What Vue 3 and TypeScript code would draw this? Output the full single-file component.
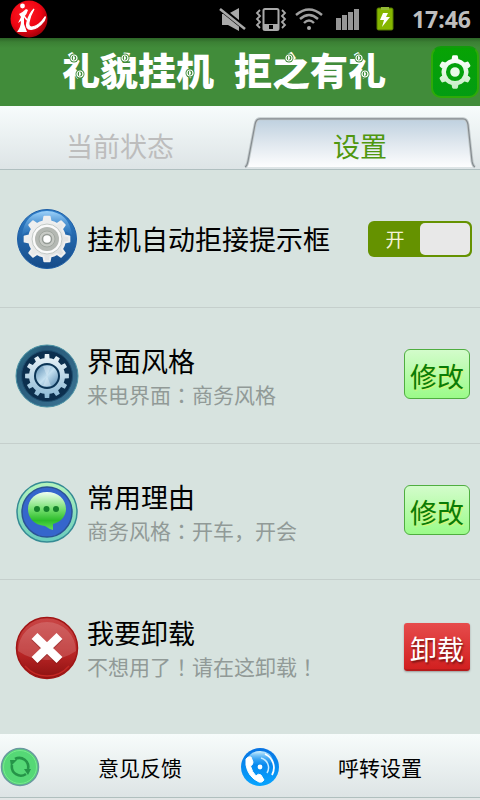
<script setup lang="ts">
import { ref } from 'vue'

type IconName = 'gear' | 'theme' | 'chat' | 'remove'

interface SettingRow {
  id: string
  icon: IconName
  title: string
  hint?: string[]
  action?: string
  danger?: boolean
}

const tabs = ['当前状态', '设置']
const activeTab = ref(1)
const autoReject = ref(true)

// Colons and exclamation marks get their own part so that they can sit centred in their cell.
const rows: SettingRow[] = [
  { id: 'auto', icon: 'gear', title: '挂机自动拒接提示框' },
  { id: 'style', icon: 'theme', title: '界面风格', hint: ['来电界面', '：', '商务风格'], action: '修改' },
  { id: 'reason', icon: 'chat', title: '常用理由', hint: ['商务风格', '：', '开车，开会'], action: '修改' },
  { id: 'remove', icon: 'remove', title: '我要卸载', hint: ['不想用了', '！', '请在这卸载', '！'], action: '卸载', danger: true },
]

const beads = [[12, 5], [18, 21], [63, 5], [128, 20], [227, 5], [297, 5], [303, 21]]

function gearPath(c: number, teeth: number, outer: number, inner: number, topShare: number, footShare: number): string {
  const step = (Math.PI * 2) / teeth
  const points: string[] = []
  const add = (r: number, a: number) => points.push(`${(c + r * Math.sin(a)).toFixed(2)} ${(c - r * Math.cos(a)).toFixed(2)}`)
  for (let i = 0; i < teeth; i++) {
    const a = i * step
    add(inner, a - step * 0.5)
    add(inner, a - step * footShare)
    add(outer, a - step * topShare)
    add(outer, a + step * topShare)
    add(inner, a + step * footShare)
  }
  return `M${points.join('L')}Z`
}

const headerGear = gearPath(16, 6, 14.5, 11.5, 0.1, 0.17)
const silverGear = gearPath(32, 8, 22.5, 18, 0.15, 0.25)
const steelGear = gearPath(32, 12, 22, 18, 0.19, 0.27)
</script>

<template>
  <div class="app">
    <div class="status">
      <svg class="brand" viewBox="0 0 38 38" aria-hidden="true">
        <defs>
          <radialGradient id="brandBall" cx=".4" cy=".35" r=".65">
            <stop offset="0" stop-color="#ff1a24" />
            <stop offset=".65" stop-color="#ee0512" />
            <stop offset="1" stop-color="#a8000a" />
          </radialGradient>
        </defs>
        <circle cx="19" cy="19" r="18.5" fill="url(#brandBall)" />
        <circle cx="12.500" cy="6" r="2.400" fill="#fff" />
        <path d="M9 14Q13 12 16 9L18 10Q17 14 14 17L14 24L17 32L7 32Q11 27 11 21L8 23L11 17Z" fill="#fff" />
        <path d="M14 16L17 20" stroke="#fff" stroke-width="1.600" />
        <path d="M24 9Q20 16 19 22Q18 27 22 27Q29 26 35 17Q36 16 34 21Q28 29 21 29.500Q15 29 17 22Q19 14 24 9Z" fill="#fff" stroke="#fff" stroke-width="1.200" />
      </svg>
      <div class="indicators">
        <svg width="36" height="38" viewBox="216 0 36 38" aria-hidden="true">
          <path d="M221 14H227L238 8V31L227 25H221Z" fill="#a9a9a9" />
          <path d="M219 8L245 29" stroke="#000" stroke-width="5" />
          <path d="M219 9L244 29" stroke="#a9a9a9" stroke-width="2.600" />
        </svg>
        <svg width="38" height="38" viewBox="252 0 38 38" aria-hidden="true">
          <rect x="262.500" y="9" width="15" height="21" rx="1.500" fill="none" stroke="#a9a9a9" stroke-width="2" />
          <path d="M262 24H278V30H262Z" fill="#a9a9a9" />
          <rect x="268" y="25" width="4" height="4" fill="#000" />
          <path d="M259 10L256 13L259 16L256 19L259 22L256 25L259 28M281 10L284 13L281 16L284 19L281 22L284 25L281 28" fill="none" stroke="#a9a9a9" stroke-width="1.800" />
        </svg>
        <svg width="38" height="38" viewBox="290 0 38 38" aria-hidden="true">
          <path d="M295 15Q308 4 321 15M299 19Q308 11 317 19M303 23Q308 18 313 23" fill="none" stroke="#a0a0a0" stroke-width="2.400" />
          <circle cx="308" cy="28" r="2" fill="#aaa" />
        </svg>
        <svg width="38" height="38" viewBox="328 0 38 38" aria-hidden="true">
          <path d="M335 18H340V30H335ZM341 15H346V30H341ZM347 12H352V30H347ZM353 9H358V30H353Z" fill="#969696" />
        </svg>
        <svg width="38" height="38" viewBox="366 0 38 38" aria-hidden="true">
          <rect x="376" y="8" width="16" height="22" rx="1.500" fill="#86b600" stroke="#537a00" stroke-width="1" />
          <rect x="380" y="7" width="8" height="3" fill="#93b935" />
          <path d="M382 13H387L385 17H389L381 27L383 20H379Z" fill="#fff" />
        </svg>
        <time>17:46</time>
      </div>
    </div>

    <header class="header">
      <h1>
        <span>礼貌挂机</span>
        <span>拒之有礼</span>
        <svg class="beads" viewBox="0 0 324 38" aria-hidden="true">
          <g v-for="([x, y], i) in beads" :key="i" :transform="`translate(${x} ${y})`">
            <circle r="4.500" fill="#418c3a" />
            <circle r="3" fill="#418c3a" stroke="#fff" stroke-width="1.200" />
            <path d="M-1 -2A2 2 0 0 1 -1 2Z" fill="#fff" />
          </g>
        </svg>
      </h1>
      <button class="gear-button" type="button" aria-label="设置">
        <svg viewBox="0 0 32 32" aria-hidden="true">
          <defs>
            <linearGradient id="gearFace" x1="0" y1="0" x2="0" y2="1">
              <stop offset="0" stop-color="#fff" />
              <stop offset="1" stop-color="#c6efc6" />
            </linearGradient>
          </defs>
          <path :d="headerGear" fill="url(#gearFace)" stroke="url(#gearFace)" stroke-width="2.500" stroke-linejoin="round" />
          <circle cx="16" cy="16" r="6.500" fill="#e8fae8" stroke="#04a10c" stroke-width="4" />
        </svg>
      </button>
    </header>

    <nav class="tabs">
      <button
        v-for="(tab, index) in tabs"
        :key="tab"
        type="button"
        class="tab"
        :class="{ active: activeTab === index }"
        @click="activeTab = index"
      >
        <svg v-if="activeTab === index" class="tab-shape" viewBox="0 0 240 64" preserveAspectRatio="none" aria-hidden="true">
          <defs>
            <linearGradient id="tabFace" x1="0" y1="0" x2="0" y2="1">
              <stop offset="0" stop-color="#bed0df" />
              <stop offset=".5" stop-color="#dfe7ee" />
              <stop offset="1" stop-color="#fdfdfe" />
            </linearGradient>
          </defs>
          <path d="M5 62Q7 61 8 56L15 19Q16 13 20 13H223Q227 13 228 19L232 56Q233 61 235 62Z" fill="url(#tabFace)" />
          <path d="M5 62Q7 61 8 56L15 19Q16 13 20 13H223Q227 13 228 19L232 56Q233 61 235 62" fill="none" stroke="#c3cacc" stroke-width="3" />
          <path d="M5 62Q7 61 8 56L15 19Q16 13 20 13H223Q227 13 228 19L232 56Q233 61 235 62" fill="none" stroke="#868c90" stroke-width="1.200" />
        </svg>
        <span>{{ tab }}</span>
      </button>
    </nav>

    <main class="list">
      <section v-for="row in rows" :key="row.id" class="row">
        <svg class="row-icon" viewBox="0 0 64 64" aria-hidden="true">
          <template v-if="row.icon === 'gear'">
            <defs>
              <linearGradient id="blueDisc" x1="0" y1="0" x2="0" y2="1">
                <stop offset="0" stop-color="#2f7fca" />
                <stop offset="1" stop-color="#164b88" />
              </linearGradient>
              <linearGradient id="blueGloss" x1="0" y1="0" x2="0" y2="1">
                <stop offset="0" stop-color="#9fd3fa" />
                <stop offset="1" stop-color="#3a86cb" stop-opacity=".3" />
              </linearGradient>
              <linearGradient id="silver" x1="0" y1="0" x2="1" y2="1">
                <stop offset="0" stop-color="#f4f4f4" />
                <stop offset="1" stop-color="#dcdede" />
              </linearGradient>
            </defs>
            <circle cx="32" cy="32" r="29.500" fill="url(#blueDisc)" stroke="#1d5ea6" />
            <path d="M7 28Q10 5 32 4Q54 5 57 28Q46 20 32 21Q17 21 7 28Z" fill="url(#blueGloss)" />
            <path :d="silverGear" fill="url(#silver)" stroke="#efefef" stroke-width="2" stroke-linejoin="round" />
            <circle cx="32" cy="32" r="15" fill="#fafafa" stroke="#c3c9c6" />
            <circle cx="32" cy="32" r="12" fill="#b4b8b3" />
            <circle cx="32" cy="32" r="8" fill="#c7cac5" stroke="#a1a7a0" />
            <circle cx="32" cy="32" r="4.500" fill="#fff" stroke="#959b96" stroke-width="1.500" />
          </template>
          <template v-else-if="row.icon === 'theme'">
            <defs>
              <linearGradient id="tealRim" x1="0" y1="0" x2="1" y2="1">
                <stop offset="0" stop-color="#368a98" />
                <stop offset=".25" stop-color="#275878" />
                <stop offset="1" stop-color="#3b7595" />
              </linearGradient>
              <linearGradient id="steel" x1="0" y1="0" x2="0" y2="1">
                <stop offset="0" stop-color="#ecf4f8" />
                <stop offset="1" stop-color="#8dbad6" />
              </linearGradient>
              <linearGradient id="hub" x1="0" y1="0" x2="1" y2="1">
                <stop offset="0" stop-color="#4e82aa" />
                <stop offset=".5" stop-color="#c4e0f0" />
                <stop offset="1" stop-color="#4e82aa" />
              </linearGradient>
            </defs>
            <circle cx="32" cy="32" r="31" fill="url(#tealRim)" stroke="#4c93a5" />
            <circle cx="32" cy="32" r="25.500" fill="#0c2f4e" stroke="#1e4d6e" />
            <path :d="steelGear" fill="url(#steel)" />
            <circle cx="32" cy="32" r="12" fill="url(#hub)" stroke="#0c3556" stroke-width="2" />
            <path d="M32 32L28 22H36ZM32 32L36 42H28Z" fill="#e0f0f8" opacity=".45" />
          </template>
          <template v-else-if="row.icon === 'chat'">
            <defs>
              <linearGradient id="mintRim" x1="0" y1="0" x2="0" y2="1">
                <stop offset="0" stop-color="#b5f5bc" />
                <stop offset="1" stop-color="#68cbbd" />
              </linearGradient>
              <linearGradient id="bubble" x1="0" y1="0" x2="0" y2="1">
                <stop offset="0" stop-color="#f0fff0" />
                <stop offset=".45" stop-color="#76df70" />
                <stop offset=".75" stop-color="#2dbd2b" />
                <stop offset="1" stop-color="#62df54" />
              </linearGradient>
            </defs>
            <circle cx="32" cy="32" r="30" fill="url(#mintRim)" stroke="#358b94" stroke-width="1.500" />
            <circle cx="32" cy="32" r="25" fill="#3566cc" stroke="#2b5395" stroke-width="1.500" />
            <path d="M32 12C43 12 51 19 51 29C51 36 46 42 38 44L38 50Q34 49 30 46C19 45 13 38 13 29C13 19 21 12 32 12Z" fill="url(#bubble)" />
            <g fill="#16822b">
              <circle cx="22" cy="29" r="3" /><circle cx="31.500" cy="29" r="3" /><circle cx="41" cy="29" r="3" />
            </g>
          </template>
          <template v-else>
            <defs>
              <linearGradient id="redDisc" x1="0" y1="0" x2="0" y2="1">
                <stop offset="0" stop-color="#c94646" />
                <stop offset=".6" stop-color="#b82525" />
                <stop offset="1" stop-color="#8d1111" />
              </linearGradient>
            </defs>
            <circle cx="32" cy="32" r="30.500" fill="url(#redDisc)" stroke="#a01515" stroke-width="1.500" />
            <path d="M3 35A29 29 0 0 1 61 35Q48 44 32 44Q16 44 3 35Z" fill="#fff" opacity=".16" />
            <path d="M10 50A29 29 0 0 0 54 50" fill="none" stroke="#c42824" stroke-width="1.500" />
            <path d="M19.500 20L44.500 44M44.500 20L19.500 44" stroke="#6e1515" stroke-width="9" opacity=".35" transform="translate(0 1)" />
            <path d="M19.500 20L44.500 44M44.500 20L19.500 44" stroke="#fff" stroke-width="8.500" />
          </template>
        </svg>

        <div class="row-text">
          <label v-if="row.id === 'auto'" class="row-title" for="auto-reject">{{ row.title }}</label>
          <h2 v-else class="row-title">{{ row.title }}</h2>
          <p v-if="row.hint" class="row-hint">
            <span v-for="(part, i) in row.hint" :key="i" :class="{ mark: i % 2 === 1 }">{{ part }}</span>
          </p>
        </div>

        <div v-if="row.id === 'auto'" class="switch" :class="{ off: !autoReject }">
          <input id="auto-reject" v-model="autoReject" type="checkbox" role="switch" />
          <span class="switch-word">{{ autoReject ? '开' : '关' }}</span>
          <span class="switch-knob"></span>
        </div>
        <button v-else class="action" :class="{ danger: row.danger }" type="button">{{ row.action }}</button>
      </section>
    </main>

    <footer class="footer">
      <button type="button" class="foot-item">
        <svg viewBox="0 0 40 40" aria-hidden="true">
          <circle cx="20" cy="20" r="18.500" fill="#55d876" stroke="#6a98a0" stroke-width="1.500" />
          <circle cx="20" cy="20" r="16.500" fill="none" stroke="#79e78f" />
          <path d="M15 12A9 9 0 0 1 28 22M26 27A9 9 0 0 1 12 18" fill="none" stroke="#259448" stroke-width="2.600" />
          <path d="M24 22H31L28 28ZM10 13H17L11 19Z" fill="#259448" />
        </svg>
        <span>意见反馈</span>
      </button>
      <button type="button" class="foot-item">
        <svg viewBox="0 0 40 40" aria-hidden="true">
          <defs>
            <linearGradient id="callDisc" x1="0" y1="0" x2="0" y2="1">
              <stop offset="0" stop-color="#0873e2" />
              <stop offset="1" stop-color="#08a5ff" />
            </linearGradient>
            <linearGradient id="callGloss" x1="0" y1="0" x2="0" y2="1">
              <stop offset="0" stop-color="#d8f5ff" />
              <stop offset="1" stop-color="#24a9fa" stop-opacity=".2" />
            </linearGradient>
          </defs>
          <circle cx="20" cy="20" r="19" fill="url(#callDisc)" />
          <path d="M6 15Q9 4 20 4Q31 4 34 15Q20 20 6 15Z" fill="url(#callGloss)" />
          <path d="M21 11A10 10 0 0 1 27 26" fill="none" stroke="#c8ecff" stroke-width="1.500" />
          <path d="M25 7A15 15 0 0 1 32 28" fill="none" stroke="#fff" stroke-width="1.800" />
          <circle cx="20" cy="20" r="2.400" fill="#fff" />
          <path d="M6 12Q8 9 11 10L13 15Q13 18 10.500 19Q12 25 16 29Q18 26 21 28L24 33Q22 36 19 35Q8 30 6 18Z" fill="#fff" stroke="#fff" stroke-width="1" />
        </svg>
        <span>呼转设置</span>
      </button>
    </footer>
  </div>
</template>

<style>
body {
  background: #d7e3df;
}
</style>

<style scoped>
.app {
  display: flex;
  flex-direction: column;
  min-height: 100vh;
  background: #d7e3df;
  color: #000;
  font-family: "Noto Sans CJK SC", sans-serif;
}

button {
  padding: 0;
  border: 0;
  background: none;
  color: inherit;
  font: inherit;
  cursor: pointer;
}

svg {
  display: block;
}

.status {
  display: flex;
  align-items: center;
  justify-content: space-between;
  height: 38px;
  padding: 0 9px 0 10px;
  background: #000;
}

.brand {
  width: 38px;
  height: 38px;
}

.indicators {
  display: flex;
  align-items: center;
}

.indicators time {
  padding-left: 7px;
  color: #bebebe;
  font: bold 23px/38px "Noto Sans", sans-serif;
}

.header {
  display: flex;
  align-items: center;
  justify-content: space-between;
  height: 68px;
  padding: 0 1px 0 62px;
  background: linear-gradient(#2c6427, #3b8034 4px, #418c3a 10px);
}

.header h1 {
  position: relative;
  display: flex;
  gap: 20px;
  margin: 0;
  padding-bottom: 6px;
  color: #fff;
  font-size: 38px;
  font-weight: 900;
  line-height: 62px;
}

.beads {
  position: absolute;
  top: 15px;
  left: 0;
  width: 324px;
  height: 38px;
}

.gear-button {
  display: grid;
  place-items: center;
  width: 48px;
  height: 52px;
  border: 2px solid #2eaa08;
  border-top-color: #129b0c;
  border-radius: 10px;
  background: linear-gradient(#07a304, #039c12);
}

.gear-button svg {
  width: 34px;
  height: 34px;
}

.tabs {
  display: grid;
  grid-template-columns: 1fr 1fr;
  height: 63px;
  border-bottom: 1px solid #b0bfc0;
  background: linear-gradient(#f7fcfc, #dde4e6);
}

.tab {
  position: relative;
  padding-top: 16px;
  color: #bdbdbd;
  font-size: 27px;
  line-height: 46px;
}

.tab.active {
  color: #50970f;
}

.tab span {
  position: relative;
}

.tab-shape {
  position: absolute;
  inset: 0;
  width: 100%;
  height: 100%;
}

.list {
  flex: 1;
}

.row {
  display: flex;
  align-items: center;
  gap: 8px;
  height: 136px;
  padding: 0 10px 0 15px;
  border-bottom: 1px solid #c5cfcc;
  box-sizing: border-box;
}

.row:first-child {
  height: 138px;
  padding-right: 8px;
}

.row:last-child {
  border-bottom: 0;
}

.row-icon {
  flex: none;
  width: 64px;
  height: 64px;
}

.row-text {
  flex: 1;
  min-width: 0;
}

.row-title {
  display: block;
  margin: 0;
  font-size: 27px;
  font-weight: 400;
  line-height: 36px;
}

.row-hint {
  margin: 0;
  color: #919a97;
  font-size: 21px;
  font-weight: 400;
  line-height: 30px;
}

.mark {
  font-family: "Noto Sans CJK TC", sans-serif;
}

.switch {
  position: relative;
  display: flex;
  align-items: center;
  width: 104px;
  height: 36px;
  padding: 2px;
  border-radius: 6px;
  background: #659200;
  box-sizing: border-box;
}

.switch input {
  position: absolute;
  inset: 0;
  width: 100%;
  height: 100%;
  margin: 0;
  opacity: 0;
  cursor: pointer;
}

.switch-word {
  flex: 1;
  color: #f4f3d8;
  font-size: 19px;
  line-height: 32px;
  text-align: center;
}

.switch-knob {
  width: 50px;
  height: 32px;
  border-radius: 5px;
  background: #e8e8e8;
}

.switch.off {
  flex-direction: row-reverse;
  background: #8c9390;
}

.action {
  width: 66px;
  height: 50px;
  margin-bottom: 4px;
  padding-top: 4px;
  border: 1px solid #4fae40;
  border-radius: 6px;
  background: linear-gradient(#d3fccb, #9bfb89);
  color: #087c08;
  font-size: 27px;
  line-height: 44px;
  text-shadow: 1px 1px 1px #e4f26a;
}

.action.danger {
  height: 48px;
  margin-bottom: 2px;
  border: 0;
  border-bottom: 2px solid #b51b1b;
  border-radius: 3px;
  background: linear-gradient(#e64c4c, #d22020);
  box-shadow: 0 1px 2px #9b9b9b;
  color: #fff;
  text-shadow: 1px 2px 2px #7c1414;
}

.footer {
  display: grid;
  grid-template-columns: 1fr 1fr;
  height: 66px;
  background: linear-gradient(#f7fcfb, #dde4e5 63px, #b0bfbe 63px, #b0bfbe 64px, #e2e6e6 64px);
  box-sizing: border-box;
}

.foot-item {
  display: flex;
  align-items: center;
  font-size: 21px;
}

.foot-item svg {
  width: 40px;
  height: 40px;
}

.foot-item span {
  flex: 1;
  line-height: 30px;
}
</style>
